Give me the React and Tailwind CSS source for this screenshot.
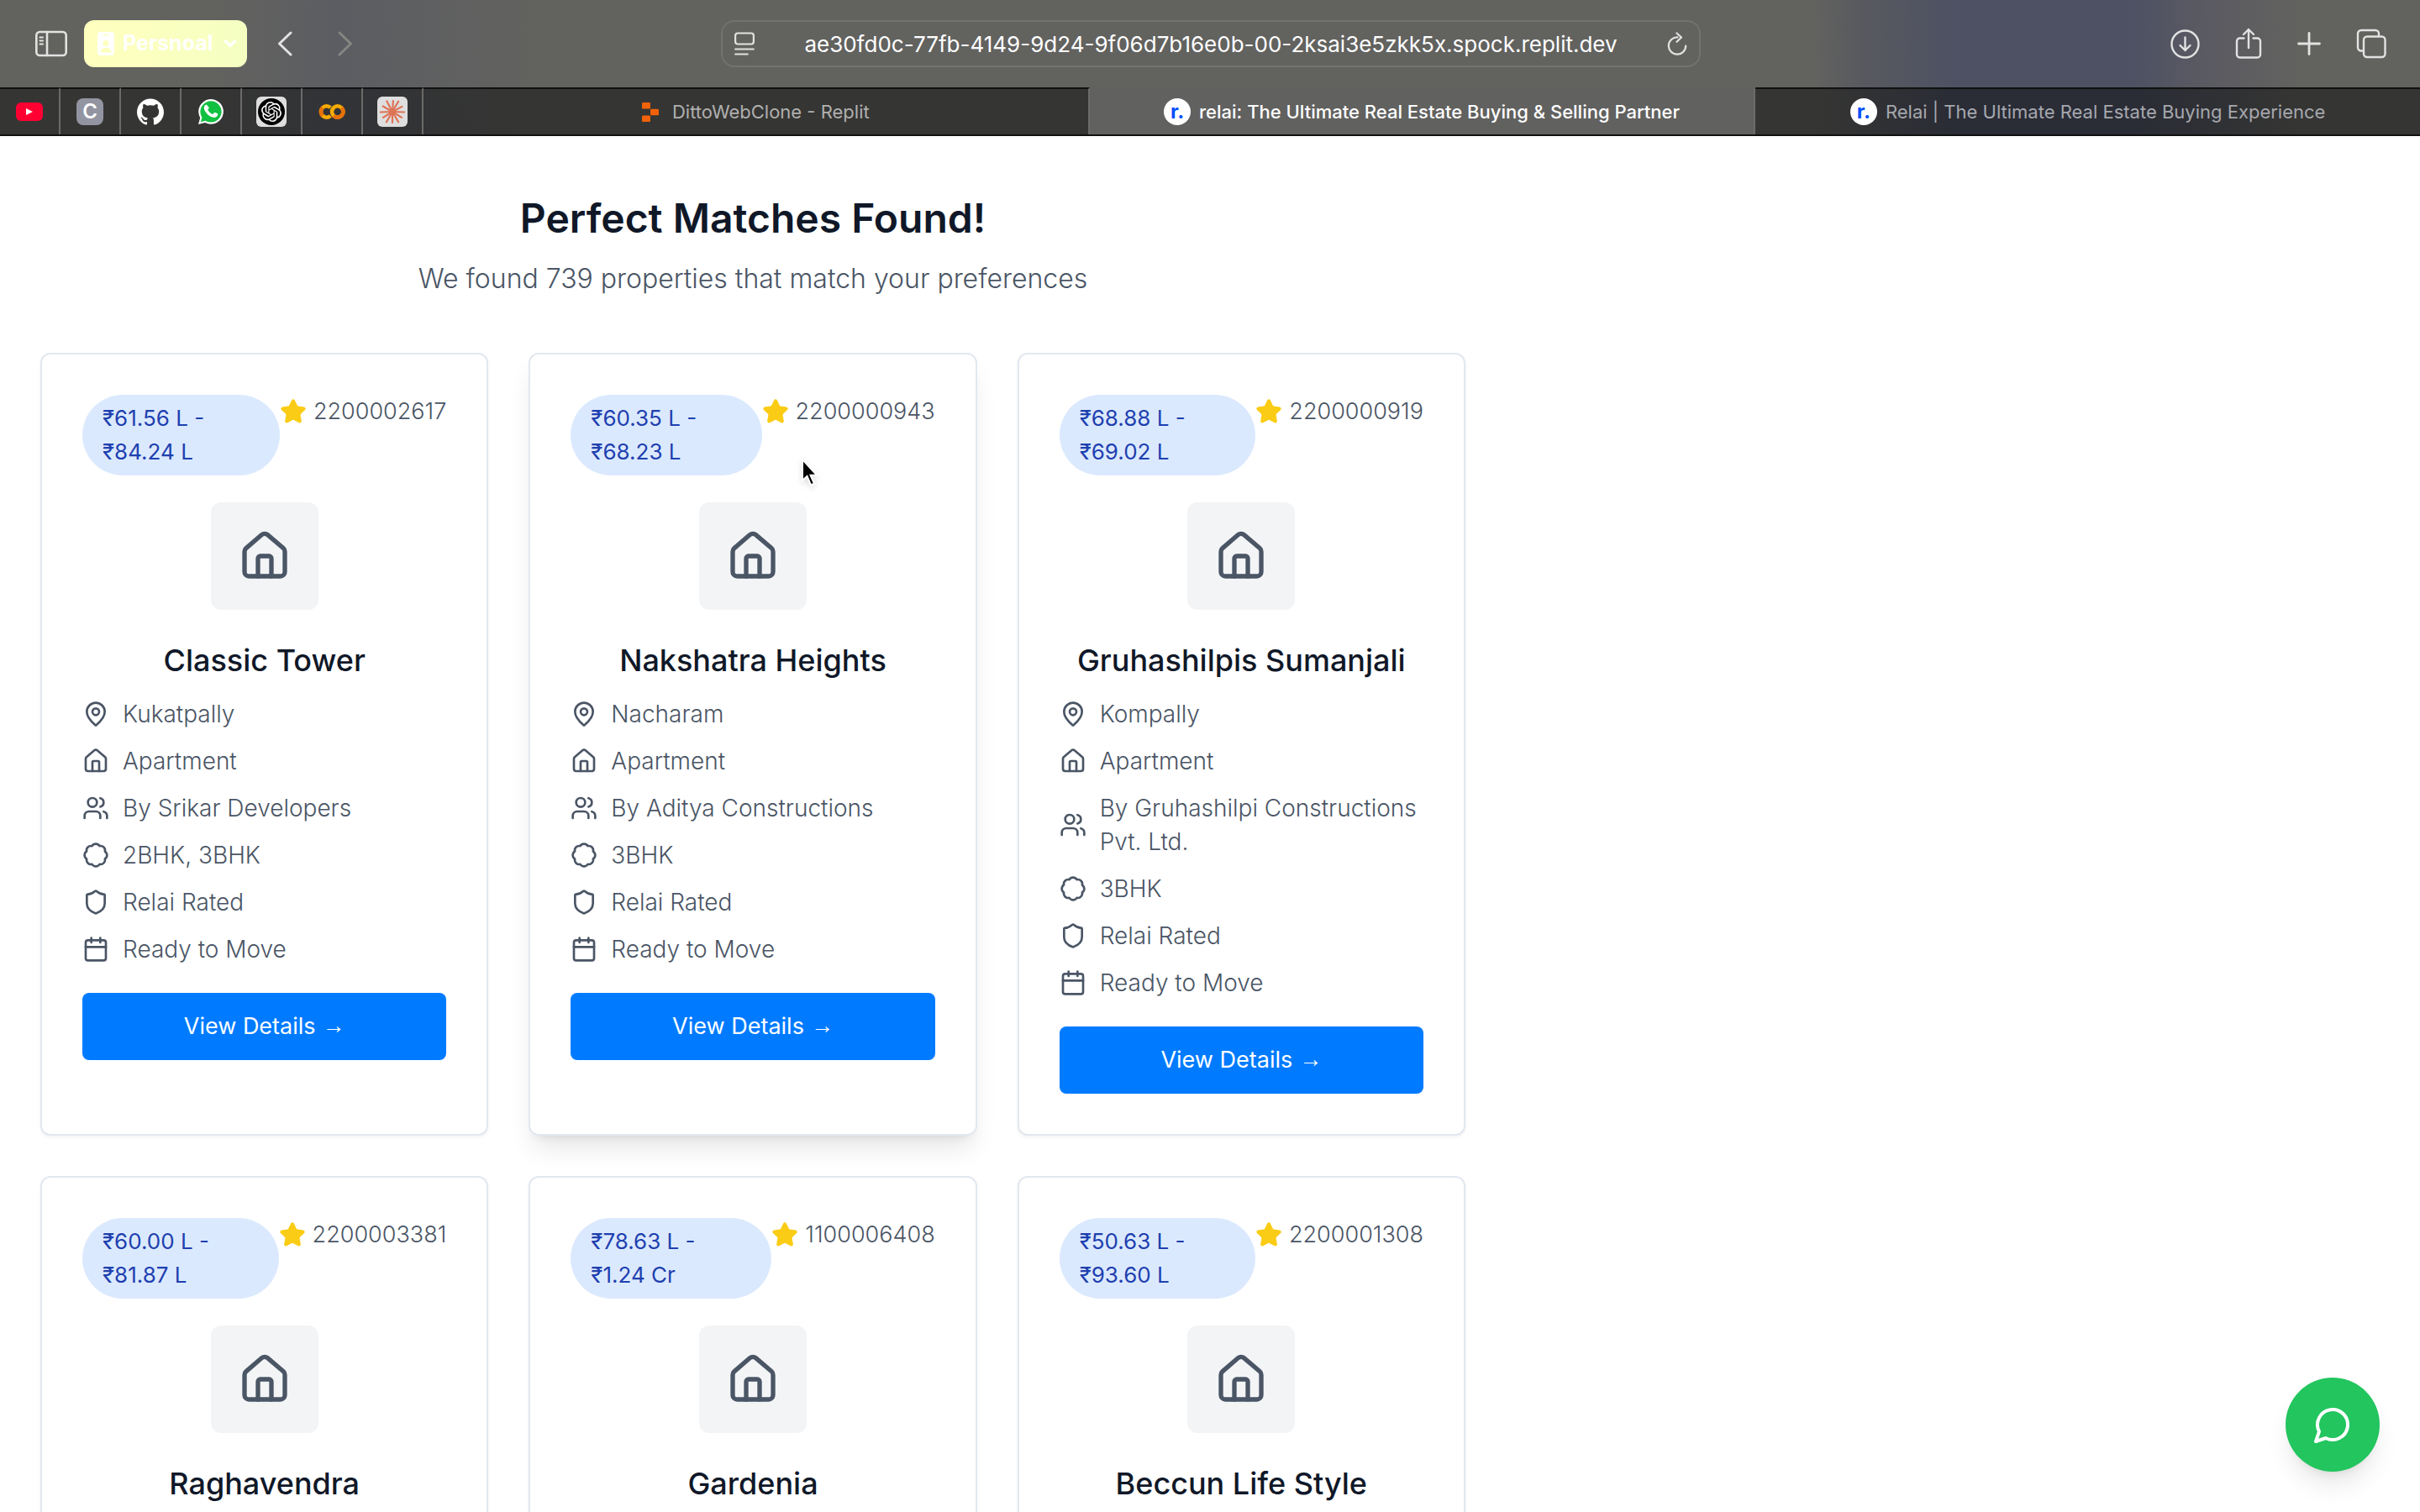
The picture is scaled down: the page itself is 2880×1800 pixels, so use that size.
import React from "react";
import { Badge, Calendar, House, MapPin, Shield, Star, Users } from "lucide-react";
import { SiGithub, SiOpenai } from "react-icons/si";

const CARDS = [
  { low: "₹61.56 L -", high: "₹84.24 L", id: "2200002617", name: "Classic Tower", area: "Kukatpally", by: "Srikar Developers", bhk: "2BHK, 3BHK" },
  { low: "₹60.35 L -", high: "₹68.23 L", id: "2200000943", name: "Nakshatra Heights", area: "Nacharam", by: "Aditya Constructions", bhk: "3BHK", raised: true },
  { low: "₹68.88 L -", high: "₹69.02 L", id: "2200000919", name: "Gruhashilpis Sumanjali", area: "Kompally", by: "Gruhashilpi Constructions Pvt. Ltd.", bhk: "3BHK" },
  { low: "₹60.00 L -", high: "₹81.87 L", id: "2200003381", name: "Raghavendra" },
  { low: "₹78.63 L -", high: "₹1.24 Cr", id: "1100006408", name: "Gardenia" },
  { low: "₹50.63 L -", high: "₹93.60 L", id: "2200001308", name: "Beccun Life Style" },
];

function Detail({ icon: Icon, children }) {
  return (
    <li className="flex items-center gap-4">
      <Icon className="size-8 shrink-0" strokeWidth={2} />
      <span>{children}</span>
    </li>
  );
}

function Card({ low, high, id, name, area, by, bhk, raised }) {
  return (
    <article
      className={
        "rounded-xl border-2 border-slate-200 bg-white p-12 " +
        (raised
          ? "shadow-[0_20px_30px_-6px_rgba(0,0,0,0.1),0_8px_12px_-8px_rgba(0,0,0,0.1)]"
          : "shadow-[0_2px_4px_rgba(0,0,0,0.05)]")
      }
    >
      <div className="mb-8 flex items-start">
        <p className="flex-1 rounded-[48px] bg-[#dbe9fe] px-6 py-2 text-[26px] leading-10 text-[#1e40af]">
          {low}
          <br />
          {high}
        </p>
        <p className="flex items-center gap-2 text-[27px] leading-10 font-light text-gray-600">
          <Star className="size-8 shrink-0 fill-[#facc15] text-[#facc15]" />
          {id}
        </p>
      </div>
      <div className="mx-auto mb-8 flex size-32 items-center justify-center rounded-xl bg-gray-100">
        <House className="size-16 text-gray-600" />
      </div>
      <h2 className="mb-4 text-center text-4xl leading-14 font-medium text-gray-900">{name}</h2>
      {area && (
        <>
          <ul className="mb-8 flex flex-col gap-4 text-[28px] leading-10 font-light text-gray-600">
            <Detail icon={MapPin}>{area}</Detail>
            <Detail icon={House}>Apartment</Detail>
            <Detail icon={Users}>By {by}</Detail>
            <Detail icon={Badge}>{bhk}</Detail>
            <Detail icon={Shield}>Relai Rated</Detail>
            <Detail icon={Calendar}>Ready to Move</Detail>
          </ul>
          <button className="flex h-20 w-full items-center justify-center gap-2 rounded-lg bg-[#007bff] text-[27px] text-white">
            View Details <span className="pb-1 font-['Open_Sans',sans-serif] leading-6">→</span>
          </button>
        </>
      )}
    </article>
  );
}

function Line({ className, viewBox, strokeWidth = 2.6, children }) {
  return (
    <svg className={className} viewBox={viewBox} fill="none" stroke="currentColor" strokeWidth={strokeWidth} strokeLinecap="round" strokeLinejoin="round" aria-hidden="true">
      {children}
    </svg>
  );
}

function WhatsAppLogo() {
  return (
    <svg className="size-8" viewBox="0 0 32 32" aria-hidden="true">
      <path d="M1 31l2.2-7.8A14.8 14.8 0 1 1 9 28.900z" fill="#fff" />
      <path d="M3.900 28.200l1.500-5.400A12.600 12.600 0 1 1 9.400 26.700z" fill="#10c040" />
      <path d="M11.600 8.600c-.4-.8-.8-.8-1.300-.8-1 0-2.500 1.300-2.500 3.600 0 2.300 1.700 4.600 2 5 2 2.900 4.600 5 8.200 6.200 2.600.9 5.600-.6 6-2.700.2-.9.2-1.600 0-1.700-.7-.5-2.400-1.300-3.200-1.500-.4-.1-.7.1-1 .5l-1.200 1.500c-.3.3-.6.3-1 .1-2-.9-3.900-2.300-5.200-4.700-.2-.4-.1-.6.200-.9l1-1.200c.2-.4.200-.7 0-1.100z" fill="#fff" />
    </svg>
  );
}

function ColabLogo() {
  return (
    <svg className="size-8" viewBox="0 0 32 32" fill="none" strokeWidth="4.600" aria-hidden="true">
      <path d="M14.300 11.200A6.700 6.700 0 1 0 14.300 20.800" stroke="#f9ab00" />
      <path d="M5 11.200A6.700 6.700 0 0 0 5 20.800" stroke="#e8710a" />
      <circle cx="22.700" cy="16" r="6.700" stroke="#f9ab00" />
      <path d="M27.400 11.200A6.700 6.700 0 0 1 18 20.800" stroke="#e8710a" />
    </svg>
  );
}

function Starburst() {
  const rays = [4, 30, 62, 92, 122, 150, 180, 210, 238, 268, 300, 332];
  return (
    <svg className="size-8" viewBox="0 0 32 32" stroke="#de7356" strokeWidth="2.200" strokeLinecap="round" aria-hidden="true">
      {rays.map((a, i) => (
        <path key={a} d={i % 2 ? "M16 16V1.800" : "M16 16V3"} transform={`rotate(${a} 16 16)`} />
      ))}
      <circle cx="16" cy="16" r="2.800" fill="#de7356" stroke="none" />
    </svg>
  );
}

const PINNED = [
  {
    label: "YouTube",
    icon: (
      <span className="flex h-[22px] w-8 items-center justify-center rounded-md bg-[#ff0033]">
        <svg className="h-2 w-2" viewBox="0 0 8 8" aria-hidden="true"><path d="M0 0l8 4-8 4z" fill="#fff" /></svg>
      </span>
    ),
  },
  { label: "C", icon: <span className="flex size-8 items-center justify-center rounded-lg bg-[#9294a1] text-2xl font-semibold text-white">C</span> },
  { label: "GitHub", icon: <SiGithub className="size-8 text-white" /> },
  { label: "WhatsApp", icon: <WhatsAppLogo /> },
  {
    label: "ChatGPT",
    icon: (
      <span className="flex size-9 items-center justify-center rounded-md bg-[#dedede]">
        <span className="flex size-8 items-center justify-center rounded-full bg-black">
          <SiOpenai className="size-6 text-white" />
        </span>
      </span>
    ),
  },
  { label: "Colab", icon: <ColabLogo /> },
  { label: "Claude", icon: <span className="flex size-9 items-center justify-center rounded-md bg-[#dedede]"><Starburst /></span> },
];

function RelaiMark() {
  return (
    <span className="flex size-8 shrink-0 items-center justify-center rounded-full bg-white text-2xl leading-6 font-bold text-[#0050ff]" aria-hidden="true">
      r.
    </span>
  );
}

function Toolbar() {
  return (
    <div className="flex h-[104px] items-center bg-[linear-gradient(90deg,#62625f_0%,#62625f_9%,#5c5d62_14%,#62625f_22%,#62625f_75%,#58595f_77%,#4d5163_81%,#4d5163_88%,#5a5a62_91%,#62625f_95%)] text-[#e2e2e2]">
      <div className="flex flex-1 items-center pl-[42px]">
        <button aria-label="Toggle sidebar">
          <Line className="h-8 w-[38px]" viewBox="0 0 38 32">
            <rect x="1.300" y="2" width="35.400" height="28" rx="4" />
            <path d="M14 2v28" />
            <path d="M5.500 8.500h3.500M5.500 12.500h3.500M5.500 16.500h3.500" strokeWidth="2" />
          </Line>
        </button>
        <button className="ml-5 flex h-14 items-center rounded-xl bg-linear-to-r from-[#ffffbe] to-[#f5ffc2] pr-3 pl-4 text-[25px] font-bold text-white">
          <svg className="mr-2.5 h-7 w-5" viewBox="0 0 20 28" aria-hidden="true">
            <rect width="20" height="28" rx="4" fill="#fff" />
            <path d="M7 3.500h6" stroke="#fdffc0" strokeWidth="1.600" strokeLinecap="round" />
            <circle cx="10" cy="13.500" r="3.600" fill="#fdffc0" />
            <path d="M3.500 24.500c.5-4 3-5.500 6.500-5.500s6 1.500 6.500 5.500z" fill="#fdffc0" />
          </svg>
          Persnoal
          <Line className="ml-3 h-2.5 w-4" viewBox="0 0 16 10" strokeWidth={3.4}><path d="M2.500 2l5.500 5.500L13.500 2" /></Line>
        </button>
        <button className="ml-9" aria-label="Back">
          <Line className="h-[30px] w-[18px]" viewBox="0 0 18 30" strokeWidth={3}><path d="M16 2L2.500 15 16 28" /></Line>
        </button>
        <button className="ml-[54px] text-[#858583]" aria-label="Forward">
          <Line className="h-[30px] w-[18px]" viewBox="0 0 18 30" strokeWidth={3}><path d="M2 2l13.500 13L2 28" /></Line>
        </button>
      </div>
      <div className="flex h-14 w-[1166px] items-center rounded-2xl border-2 border-[#727270] px-3.5">
        <Line className="h-7 w-6" viewBox="0 0 24 28" strokeWidth={2.2}>
          <rect x="1.100" y="1.500" width="21.800" height="13" rx="3" />
          <path d="M1.200 20.500h21.600M1.200 26.500h14.600" />
        </Line>
        <input aria-label="Address" className="min-w-0 flex-1 bg-transparent text-center text-[26px] text-white outline-none" defaultValue="ae30fd0c-77fb-4149-9d24-9f06d7b16e0b-00-2ksai3e5zkk5x.spock.replit.dev" />
        <button aria-label="Reload">
          <Line className="h-7 w-6" viewBox="0 0 24 28" strokeWidth={2.2}>
            <path d="M12.500 6.300a10.200 10.200 0 1 0 9.700 10.200M11.500 1.500l5.500 5-5.500 5.300" />
          </Line>
        </button>
      </div>
      <div className="flex flex-1 items-center justify-end gap-[42px] pr-10">
        <button aria-label="Downloads">
          <Line className="size-[35px]" viewBox="0 0 35 35" strokeWidth={2.4}>
            <circle cx="17.500" cy="17.500" r="16" />
            <path d="M17.500 9.500v15.500M11.500 19l6 6 6-6" />
          </Line>
        </button>
        <button aria-label="Share">
          <Line className="h-[38px] w-8" viewBox="0 0 32 38" strokeWidth={2.4}>
            <path d="M10.500 12.500H5.500a3.500 3.500 0 0 0-3.500 3.500v16a3.500 3.500 0 0 0 3.500 3.500h21a3.500 3.500 0 0 0 3.500-3.500V16a3.500 3.500 0 0 0-3.500-3.500h-5M16 24V2M10 8l6-6 6 6" />
          </Line>
        </button>
        <button aria-label="New tab">
          <Line className="size-7" viewBox="0 0 28 28" strokeWidth={2.800}><path d="M14 1.500v25M1.500 14h25" /></Line>
        </button>
        <button aria-label="Show all tabs">
          <Line className="size-9" viewBox="0 0 36 36" strokeWidth={2.4}>
            <path d="M8.500 26.500H6A4 4 0 0 1 2 22.500V6a4 4 0 0 1 4-4h17a4 4 0 0 1 4 4v3" />
            <rect x="9" y="9.500" width="25.500" height="24.500" rx="4" />
          </Line>
        </button>
      </div>
    </div>
  );
}

const TAB = "flex min-w-0 flex-1 items-center justify-center gap-2.5 border-t-2 text-[22px]";

function TabBar() {
  return (
    <nav className="flex h-[58px] border-b-2 border-[#111] bg-[linear-gradient(90deg,#353533_0%,#353533_8%,#323337_14%,#353533_22%,#353533_75%,#2a2c36_81%,#2a2c36_88%,#353533_95%)]">
      {PINNED.map((p) => (
        <button key={p.label} aria-label={p.label} className="flex w-[72px] items-center justify-center border-t-2 border-r-2 border-t-[#111] border-r-[#6a6a69]">
          {p.icon}
        </button>
      ))}
      <button className={TAB + " border-r-2 border-t-[#111] border-r-[#6a6a69] text-[#b0b0af]"}>
        <svg className="mr-1.5 h-[23px] w-5" viewBox="0 0 20 23" fill="#f26207" aria-hidden="true">
          <rect width="10" height="7.500" rx="1.200" />
          <rect x="10" y="7.700" width="10" height="7.500" rx="1.200" />
          <rect y="15.400" width="10" height="7.500" rx="1.200" />
        </svg>
        DittoWebClone - Replit
      </button>
      <button className={TAB + " border-r-2 border-t-[#61615f] border-r-[#6a6a69] bg-[#61615f] font-medium text-white"}>
        <RelaiMark />
        relai: The Ultimate Real Estate Buying &amp; Selling Partner
      </button>
      <button className={TAB + " border-t-[#111] text-[#a6a8ae]"}>
        <RelaiMark />
        Relai | The Ultimate Real Estate Buying Experience
      </button>
    </nav>
  );
}

export default function App() {
  return (
    <div className="relative flex h-screen flex-col overflow-hidden bg-white font-['Inter',sans-serif]">
      <header className="shrink-0">
        <Toolbar />
        <TabBar />
      </header>
      <main className="min-h-0 max-w-[1792px] flex-1 px-12 pt-[66px]">
        <h1 className="mb-4 text-center text-5xl leading-16 font-semibold text-gray-900">Perfect Matches Found!</h1>
        <p className="mb-16 text-center text-[32px] leading-12 font-light text-gray-600">We found 739 properties that match your preferences</p>
        <div className="grid grid-cols-3 gap-12">
          {CARDS.map((c) => (
            <Card key={c.id} {...c} />
          ))}
        </div>
      </main>
      <button aria-label="Chat" className="absolute right-12 bottom-12 flex size-28 items-center justify-center rounded-full bg-[#22c55e] text-white shadow-[0_20px_30px_-6px_rgba(0,0,0,0.1),0_8px_12px_-8px_rgba(0,0,0,0.1)]">
        <Line className="size-12" viewBox="0 0 24 24" strokeWidth={2}><path d="M7.900 20A9 9 0 1 0 4 16.100L2 22Z" /></Line>
      </button>
      <svg className="pointer-events-none absolute top-[544px] left-[952px] h-9 w-6 drop-shadow-md" viewBox="0 0 24 36" aria-hidden="true">
        <path d="M3 3v25l5.500-5 4.500 10.500 4-1.800-4.500-10h7.500z" fill="#000" stroke="#fff" strokeWidth="2" />
      </svg>
    </div>
  );
}
